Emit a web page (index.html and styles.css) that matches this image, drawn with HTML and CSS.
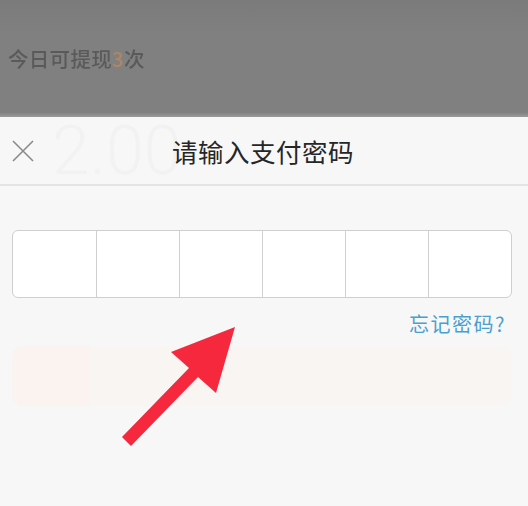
FILE: index.html
```html
<!DOCTYPE html>
<html lang="zh">
<head>
<meta charset="utf-8">
<link rel="stylesheet" href="styles.css">
</head>
<body>
<div class="page">
  <div class="mask">
    <p class="limit">今日可提现<span class="num">3</span>次</p>
  </div>
  <div class="sheet">
    <div class="sheet-head">
      <span class="ghost-amount">2.00</span>
      <svg class="close" width="22" height="22" viewBox="0 0 22 22"><path d="M1 1 L21 21 M21 1 L1 21" stroke="#8a8a8a" stroke-width="1.6" fill="none"/></svg>
      <h1 class="title">请输入支付密码</h1>
    </div>
    <div class="pwd">
      <div class="cell"></div>
      <div class="cell"></div>
      <div class="cell"></div>
      <div class="cell"></div>
      <div class="cell"></div>
      <div class="cell"></div>
    </div>
    <div class="forgot-row"><a class="forgot">忘记密码?</a></div>
    <div class="ghost-btn">
      <div class="ghost-left"></div>
    </div>
  </div>
  <svg class="arrow" width="528" height="506" viewBox="0 0 528 506">
    <polygon points="122,437 131,446 198,377 216,393 235,327 171,352 189,368" fill="#f5283e"/>
  </svg>
</div>
</body>
</html>
```
FILE: styles.css
```css
* { box-sizing: border-box; }
html, body { margin: 0; padding: 0; }
body {
  width: 528px;
  height: 506px;
  overflow: hidden;
  background: #f7f7f7;
  font-family: "Noto Sans CJK SC", "Noto Sans", sans-serif;
}
.page {
  position: relative;
  width: 528px;
  height: 506px;
  display: flex;
  flex-direction: column;
}
.mask {
  height: 117px;
  background: linear-gradient(#7b7b7b, #808080 30%, #808080 96%, #9a9a9a);
  padding: 44px 0 0 8px;
}
.limit {
  margin: 0;
  font-size: 20.5px;
  line-height: 28px;
  font-weight: 500;
  color: #5a5a5a;
  letter-spacing: 0.3px;
  filter: blur(0.6px);
}
.num { color: #b08563; }
.sheet {
  flex: 1;
  background: #f7f7f7;
  display: flex;
  flex-direction: column;
}
.sheet-head {
  position: relative;
  height: 69px;
  border-bottom: 2px solid #e4e4e4;
  display: flex;
  align-items: center;
  justify-content: center;
}
.ghost-amount {
  position: absolute;
  left: 52px;
  top: -4px;
  font-family: "Roboto", sans-serif;
  font-weight: 300;
  font-size: 68px;
  line-height: 76px;
  color: #f2f2f2;
}
.close {
  position: absolute;
  left: 12px;
  top: 23px;
}
.title {
  position: relative;
  margin: 0 0 0 -2px;
  font-size: 25.5px;
  font-weight: 400;
  color: #262626;
  letter-spacing: 0.5px;
}
.pwd {
  margin: 44px 16px 0 12px;
  height: 68px;
  border: 1.5px solid #cfcfcf;
  border-radius: 6px;
  background: #fff;
  display: grid;
  grid-template-columns: repeat(6, 1fr);
  overflow: hidden;
}
.cell { border-left: 1.5px solid #d0d0d0; }
.cell:first-child { border-left: none; }
.forgot-row {
  display: flex;
  justify-content: flex-end;
  padding: 12px 22px 0 0;
  height: 46px;
}
.forgot {
  font-size: 20px;
  line-height: 28px;
  color: #4b9fcf;
  letter-spacing: 1.5px;
}
.ghost-btn {
  margin: 2px 16px 0 12px;
  height: 60px;
  border-radius: 12px;
  background: #f8f5f3;
  display: flex;
}
.ghost-left {
  width: 78px;
  border-radius: 12px 0 0 12px;
  background: #faf3ef;
}
.arrow {
  position: absolute;
  left: 0;
  top: 0;
  pointer-events: none;
}
```
